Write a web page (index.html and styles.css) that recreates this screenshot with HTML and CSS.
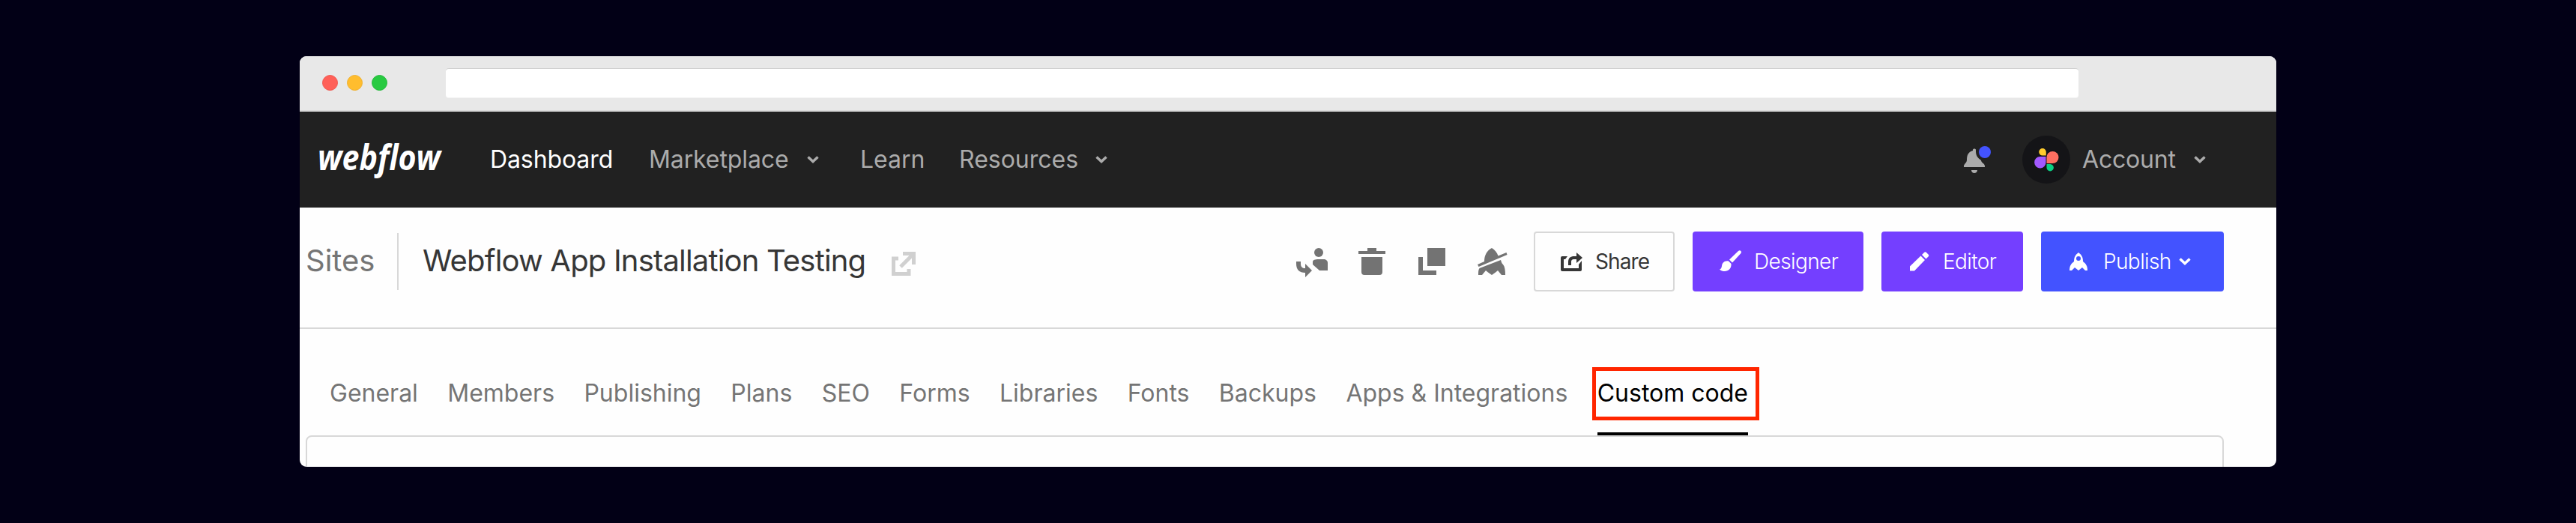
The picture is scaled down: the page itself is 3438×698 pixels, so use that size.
FILE: index.html
```html
<!DOCTYPE html>
<html lang="en">
<head>
<meta charset="utf-8">
<title>Webflow App Installation Testing</title>
<link rel="stylesheet" href="styles.css">
</head>
<body>
<div class="window">
  <div class="chrome">
    <div class="lights"><span class="light red"></span><span class="light yellow"></span><span class="light green"></span></div>
    <div class="address"></div>
  </div>
  <nav class="nav">
    <svg class="logo" width="190" height="80" viewBox="0 0 190 80"><text x="3" y="54" textLength="164" lengthAdjust="spacingAndGlyphs">webflow</text></svg>
    <a class="link active">Dashboard</a>
    <a class="link market">Marketplace</a>
    <svg class="chev chev-m" width="16" height="10" viewBox="0 0 16 10"><path d="M1.500 1.500L8 7.500l6.500-6"/></svg>
    <a class="link learn">Learn</a>
    <a class="link resources">Resources</a>
    <svg class="chev chev-r" width="16" height="10" viewBox="0 0 16 10"><path d="M1.500 1.500L8 7.500l6.500-6"/></svg>
    <svg class="bell" width="38" height="38" viewBox="0 0 38 38"><path fill="#ababab" d="M12 6c0-2 4-2 4 0v2c0 6 3 9 7 12 0 3 5 4.500 5 7.500V29H0v-1.500c0-2.500 4-4.500 4-8 0-6.500 2-11 8-12.500zM10 33h8c0 5.300-8 5.300-8 0z"/><circle cx="28" cy="9" r="8" fill="#4353ff"/></svg>
    <svg class="avatar" width="64" height="64" viewBox="0 0 64 64"><circle cx="32" cy="32" r="32" fill="#141417"/><path fill="#ffcb2d" d="M27 17a4.800 4.800 0 0 1 4.800 4.800v4.800H27A4.800 4.800 0 0 1 27 17z"/><path fill="#ff6f61" d="M32.500 37V29A8 8 0 1 1 40.500 37z"/><path fill="#a259ff" d="M31.500 28v7A7.700 7.700 0 1 1 23.800 28z"/><path fill="#0acf83" d="M32.500 38h4.800a4.700 4.700 0 1 1-4.800 4.700z"/></svg>
    <a class="link account">Account</a>
    <svg class="chev chev-a" width="16" height="10" viewBox="0 0 16 10"><path d="M1.500 1.500L8 7.500l6.500-6"/></svg>
  </nav>
  <header class="sitebar">
    <span class="sites">Sites</span>
    <span class="divider"></span>
    <h1 class="title">Webflow App Installation Testing</h1>
    <svg class="external" width="32" height="32" viewBox="0 0 32 32"><path d="M9 9H2.500v20.500H23V23M15 2.500h14.500V17M28.500 3.500L12 20" fill="none" stroke="#d0d0d0" stroke-width="5"/></svg>
    <div class="tools">
      <svg width="43" height="39" viewBox="0 0 43 39"><circle cx="30" cy="6" r="6"/><path d="M22 18.500C22 16 25 15 30 15h6c4 0 6 2 6 5v10H31L22 22zM0 18h6v3c0 4 2 6 6 6v-6l9 9-9 9v-6C4 33 0 29 0 21z"/></svg>
      <svg width="36" height="36" viewBox="0 0 36 36"><path d="M0 4h12V0h12v4h12v4H0zM4 12h28v20a4 4 0 0 1-4 4H8a4 4 0 0 1-4-4z"/></svg>
      <svg width="36" height="36" viewBox="0 0 36 36"><path d="M12 0h24v24H12zM0 12h6v18h18v6H0z"/></svg>
      <svg width="40" height="36" viewBox="0 0 40 36"><path d="M0 22l9-4C9 9 13 3 19 0c4 2.500 7 6 8.500 10.500L38.500 6l1 3L1.500 25zM1 36c0-4 0-7 1.500-9L31 16c1 3 1 4 3 6 2.500 3 3 8 3 14h-5l-5-6-3 2.500-5 3.500-5-3.500-3-2.500-5 6z"/></svg>
    </div>
    <div class="buttons">
      <a class="btn share"><svg width="30" height="25" viewBox="0 0 30 25"><path d="M9 5L6 9H4v12h20v-5l4-5v12a2 2 0 0 1-2 2H2a2 2 0 0 1-2-2V7a2 2 0 0 1 2-2zM21 0l8 7-8 7V9h-3c-3 0-4 1-4 4v4h-4v-4c0-6 3-8 8-8h3z"/></svg><span>Share</span></a>
      <a class="btn designer"><svg width="30" height="30" viewBox="0 0 30 30"><path d="M25 1c2.500-2 5 .5 3.500 3L17 16.500 13 12.500zM12 14.500l3.500 3.500C16 24 12 28 7 28c-3 0-5-.5-7-2.500 2-.5 2.500-2 3-4.500.5-4.500 4-7.500 9-6.500z"/></svg><span>Designer</span></a>
      <a class="btn editor"><svg width="26" height="26" viewBox="0 0 26 26"><path d="M14.500 5.500l5.500 5.500L6 25.500H0v-6zM16 4L19 1c1-1 2-1 3 0l2.500 2.500c1 1 1 2 0 3L21.500 9.500z"/></svg><span>Editor</span></a>
      <a class="btn publish"><svg width="24" height="25" viewBox="0 0 24 25"><path fill-rule="evenodd" d="M12 0c4 3 6 6 6 12 4 3 6 6 6 12h-3l-4-4-5 4-5-4-4 4H0c0-6 2-9 6-12 0-6 2-9 6-12zM12 5a3 3 0 1 0 0 6 3 3 0 0 0 0-6z"/></svg><span>Publish</span><svg width="16" height="10" viewBox="0 0 16 10"><path d="M1.500 1.500L8 7.500l6.500-6" fill="none" stroke="#fff" stroke-width="3.500"/></svg></a>
    </div>
  </header>
  <div class="tabs">
    <a class="tab">General</a><a class="tab">Members</a><a class="tab">Publishing</a><a class="tab">Plans</a><a class="tab">SEO</a><a class="tab">Forms</a><a class="tab">Libraries</a><a class="tab">Fonts</a><a class="tab">Backups</a><a class="tab">Apps &amp; Integrations</a><a class="tab current">Custom code<span class="highlight"></span></a>
  </div>
  <div class="panel"></div>
</div>
</body>
</html>
```
FILE: styles.css
```css
* { box-sizing: border-box; }
body {
  margin: 0;
  height: 698px;
  padding: 75px 400px;
  background: #020016;
  font-family: Inter, "Liberation Sans", sans-serif;
  overflow: hidden;
}
svg { display: block; flex: none; }
.window {
  width: 2638px;
  height: 548px;
  background: #fefefe;
  border-radius: 9px;
  overflow: hidden;
}
.chrome {
  height: 74px;
  padding: 16px 0 0 30px;
  background: #e8e8e8;
  border-bottom: 2px solid #dadada;
  display: flex;
}
.lights { display: flex; gap: 12px; padding-top: 9px; width: 165px; }
.light { width: 21px; height: 21px; border-radius: 50%; border: 1px solid; }
.red { background: #ff6058; border-color: #f0574f; }
.yellow { background: #ffbd2e; border-color: #efb02e; }
.green { background: #28ca41; border-color: #25b83c; }
.address {
  width: 2179px;
  height: 40px;
  background: #fff;
  border-top: 1px solid #cfcfcf;
  border-bottom: 1px solid #f2f2f2;
  border-radius: 4px;
}
.nav {
  height: 128px;
  background: #212121;
  display: flex;
  align-items: center;
  padding-left: 21px;
}
.logo { fill: #fff; font: italic 700 46px "Open Sans", sans-serif; overflow: visible; }
.link { font-size: 32px; line-height: 40px; color: #ababab; white-space: nowrap; }
.active { color: #fff; width: 212px; margin-left: 43px; letter-spacing: -0.1px; }
.market { width: 211px; letter-spacing: -0.1px; }
.learn { width: 132px; margin-left: 55px; }
.resources { width: 182px; }
.chev { fill: none; stroke: #ababab; stroke-width: 3.5; }
.bell { margin-left: 1143px; }
.avatar { margin-left: 40px; }
.account { width: 149px; margin-left: 16px; letter-spacing: -0.2px; }
.sitebar {
  height: 162px;
  border-bottom: 2px solid #d8d8d8;
  display: flex;
  align-items: flex-start;
  padding: 32px 0 0 8px;
}
.sites, .title { font-size: 40px; line-height: 78px; font-weight: 400; margin: 0; white-space: nowrap; }
.sites { color: #757575; width: 122px; }
.divider { width: 2px; height: 76px; margin-top: 2px; background: #d8d8d8; }
.title { color: #363636; margin-left: 32px; width: 626px; letter-spacing: -0.82px; }
.external { margin-top: 27px; }
.tools { display: flex; gap: 43px; fill: #737373; margin: 22px 0 0 508px; width: 317px; }
.tools svg:first-child { margin-right: -3px; }
.tools svg:nth-child(2) { margin-right: 1px; }
.buttons { display: flex; gap: 24px; }
.btn {
  height: 80px;
  border-radius: 4px;
  display: flex;
  align-items: center;
  color: #fff;
  fill: #fff;
  font-size: 28px;
  font-weight: 300;
  letter-spacing: -0.6px;
  white-space: nowrap;
  padding-left: 36px;
}
.share { width: 188px; border: 2px solid #d8d8d8; color: #363636; fill: #363636; font-weight: 400; letter-spacing: -0.9px; padding-left: 34px; }
.share span { margin-left: 16px; }
.designer { width: 228px; background: #743fff; }
.designer span { margin-left: 16px; }
.editor { width: 189px; background: #743fff; padding-left: 38px; }
.editor span { margin-left: 18px; }
.publish { width: 244px; background: #4353ff; padding-left: 38px; }
.publish span { margin-left: 21px; width: 101px; }
.tabs { display: flex; gap: 39.4px; height: 142px; padding-left: 40px; }
.tab { position: relative; height: 142px; font-size: 32px; line-height: 40px; padding-top: 66px; color: #757575; white-space: nowrap; }
.current { color: #000; border-bottom: 4px solid #000; }
.highlight { position: absolute; left: -7px; top: 51px; width: 223px; height: 71px; border: 5px solid #ff2600; }
.panel { width: 2560px; height: 60px; margin-left: 8px; border: 2px solid #d8d8d8; border-radius: 8px; }
```
